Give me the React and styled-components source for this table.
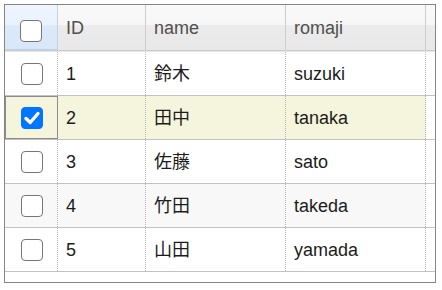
import React from "react";
import styled, { createGlobalStyle, css } from "styled-components";

const Global = createGlobalStyle`
  html, body { margin: 0; padding: 0; background: #fff; }
  body { font-family: "Liberation Sans", Arial, "Noto Sans CJK JP", sans-serif; }
`;

const Page = styled.div`
  padding: 4px 0 0 4px;
`;

const Grid = styled.div`
  width: 430px;
  height: 277px;
  border: 1px solid #858585;
  background: #fff;
  display: flex;
  flex-direction: column;
`;

const COLS = "53px 88px 140px 140px 9px";

const HeaderRow = styled.div`
  display: grid;
  grid-template-columns: ${COLS};
  height: 45px;
  border-bottom: 1px solid #cbcbcb;
  box-shadow: 0 1px 0 #e6e6e6;
  margin-bottom: 1px;
`;

const HeaderCell = styled.div`
  display: flex;
  align-items: center;
  padding-left: 8px;
  box-sizing: border-box;
  font-size: 18px;
  line-height: 20px;
  color: #4f4f4f;
  border-right: ${(p) => (p.$last ? "none" : "1px solid #cdcdcd")};
  background: linear-gradient(#f9f9f9 0%, #f6f6f6 44%, #ebebeb 46%, #e8e8e8 100%);
  ${(p) =>
    p.$select &&
    css`
      justify-content: center;
      align-items: flex-start;
      padding: 15px 0 0 0;
      background: linear-gradient(#eef5fd 0%, #e9f2fd 44%, #dce9f9 46%, #d8e7f9 100%);
      border-right: 1px solid #c8d2dc;
      box-shadow: inset 0 -1px 0 #b8d2f0;
    `}
`;

const Row = styled.div`
  display: grid;
  grid-template-columns: ${COLS};
  height: 43px;
  border-bottom: 1px solid #c2c2c2;
  background: ${(p) => (p.$selected ? "#f5f4dc" : p.$alt ? "#f8f8f8" : "#fff")};
`;

const Cell = styled.div`
  display: flex;
  align-items: center;
  padding-left: 8px;
  box-sizing: border-box;
  font-size: 18px;
  line-height: 20px;
  color: #1c1c1c;
  border-right: 1px dotted #b4b4b4;
  ${(p) =>
    p.$select &&
    css`
      padding: 0 0 0 2px;
      justify-content: center;
    `}
  ${(p) =>
    p.$focus &&
    css`
      outline: 1px solid #8c8c8c;
      outline-offset: -1px;
    `}
`;

const Filler = styled.div`
  background: #fff;
`;

const BoxWrap = styled.span`
  position: relative;
  display: inline-block;
  width: 22px;
  height: 22px;
`;

const Box = styled.input.attrs({ type: "checkbox" })`
  appearance: none;
  -webkit-appearance: none;
  margin: 0;
  width: 22px;
  height: 22px;
  box-sizing: border-box;
  border: 1.5px solid #777;
  border-radius: 4px;
  background: #fff;
  display: block;
  &:checked {
    background: #0075ff;
    border-color: #0075ff;
  }
`;

const Tick = styled.svg`
  position: absolute;
  left: 0;
  top: 0;
  pointer-events: none;
`;

function Check({ checked }) {
  return (
    <BoxWrap>
      <Box checked={checked} readOnly />
      {checked && (
        <Tick width="22" height="22" viewBox="0 0 22 22">
          <path d="M5 11.5 L9.2 15.5 L17 6.5" fill="none" stroke="#fff" strokeWidth="3.4" strokeLinecap="round" strokeLinejoin="round" />
        </Tick>
      )}
    </BoxWrap>
  );
}

const data = [
  { id: 1, name: "鈴木", romaji: "suzuki" },
  { id: 2, name: "田中", romaji: "tanaka", selected: true },
  { id: 3, name: "佐藤", romaji: "sato" },
  { id: 4, name: "竹田", romaji: "takeda" },
  { id: 5, name: "山田", romaji: "yamada" },
];

export default function App() {
  return (
    <Page>
      <Global />
      <Grid>
        <HeaderRow>
          <HeaderCell $select>
            <Check checked={false} />
          </HeaderCell>
          <HeaderCell>ID</HeaderCell>
          <HeaderCell>name</HeaderCell>
          <HeaderCell>romaji</HeaderCell>
          <HeaderCell $last />
        </HeaderRow>
        {data.map((r, i) => (
          <Row key={r.id} $selected={r.selected} $alt={i % 2 === 1}>
            <Cell $select $focus={r.selected}>
              <Check checked={!!r.selected} />
            </Cell>
            <Cell>{r.id}</Cell>
            <Cell>{r.name}</Cell>
            <Cell>{r.romaji}</Cell>
            <Filler />
          </Row>
        ))}
      </Grid>
    </Page>
  );
}
